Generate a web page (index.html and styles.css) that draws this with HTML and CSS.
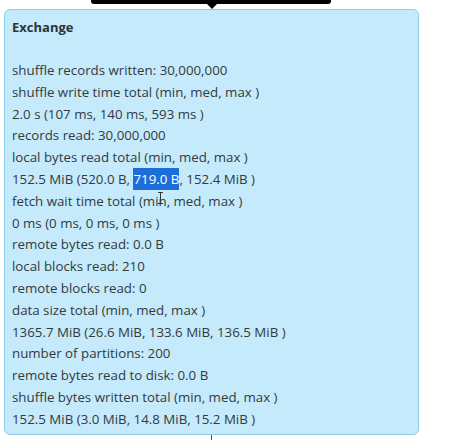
FILE: index.html
```html
<!DOCTYPE html>
<html>
<head>
<meta charset="utf-8">
<link rel="stylesheet" href="styles.css">
</head>
<body>
<div class="page">
  <div class="topbar"></div>
  <div class="box">
    <div class="title">Exchange</div>
    <div class="lines">
      <div class="line">shuffle records written: 30,000,000</div>
      <div class="line">shuffle write time total (min, med, max )</div>
      <div class="line">2.0 s (107 ms, 140 ms, 593 ms )</div>
      <div class="line">records read: 30,000,000</div>
      <div class="line">local bytes read total (min, med, max )</div>
      <div class="line">152.5 MiB (520.0 B, <span class="sel">719.0 B</span>, 152.4 MiB )</div>
      <div class="line">fetch wait time total (min, med, max )</div>
      <div class="line">0 ms (0 ms, 0 ms, 0 ms )</div>
      <div class="line">remote bytes read: 0.0 B</div>
      <div class="line">local blocks read: 210</div>
      <div class="line">remote blocks read: 0</div>
      <div class="line">data size total (min, med, max )</div>
      <div class="line">1365.7 MiB (26.6 MiB, 133.6 MiB, 136.5 MiB )</div>
      <div class="line">number of partitions: 200</div>
      <div class="line">remote bytes read to disk: 0.0 B</div>
      <div class="line">shuffle bytes written total (min, med, max )</div>
      <div class="line">152.5 MiB (3.0 MiB, 14.8 MiB, 15.2 MiB )</div>
    </div>
    <div class="cursor"></div>
  </div>
  <div class="stem"></div>
</div>
</body>
</html>
```

FILE: styles.css
```css
html, body {
  margin: 0;
  padding: 0;
  background: #ffffff;
}
.page {
  padding-left: 4px;
  width: 414px;
}
.topbar {
  position: relative;
  margin-left: 87px;
  width: 240px;
  height: 4px;
  background: #000;
  border-radius: 0 0 3px 3px;
}
.topbar::after {
  content: "";
  position: absolute;
  left: 115px;
  top: 3px;
  border-left: 6px solid transparent;
  border-right: 6px solid transparent;
  border-top: 6px solid #000;
}
.box {
  position: relative;
  margin-top: 5px;
  box-sizing: border-box;
  width: 415px;
  height: 426px;
  border: 1px solid #8dcfe6;
  border-radius: 6px;
  background: #c5eafb;
  padding: 8px 0 0 7px;
  font-family: "Open Sans", "Noto Sans", sans-serif;
  color: #333a40;
}
.title {
  font-weight: 700;
  font-size: 13px;
  line-height: 18px;
  color: #2e3338;
}
.lines {
  margin-top: 24px;
}
.line {
  font-size: 13.3px;
  line-height: 21.8px;
  white-space: nowrap;
}
.sel {
  background: #1c6fd9;
  color: #fff;
  padding: 2px 0;
}
.cursor {
  position: absolute;
  left: 155px;
  top: 182px;
  width: 1px;
  height: 12px;
  background: #333;
}
.cursor::before, .cursor::after {
  content: "";
  position: absolute;
  left: -2px;
  width: 5px;
  height: 1px;
  background: #333;
}
.cursor::before { top: 0; }
.cursor::after { bottom: 0; }
.stem {
  margin-left: 207px;
  width: 1px;
  height: 6px;
  background: #555;
}
```
